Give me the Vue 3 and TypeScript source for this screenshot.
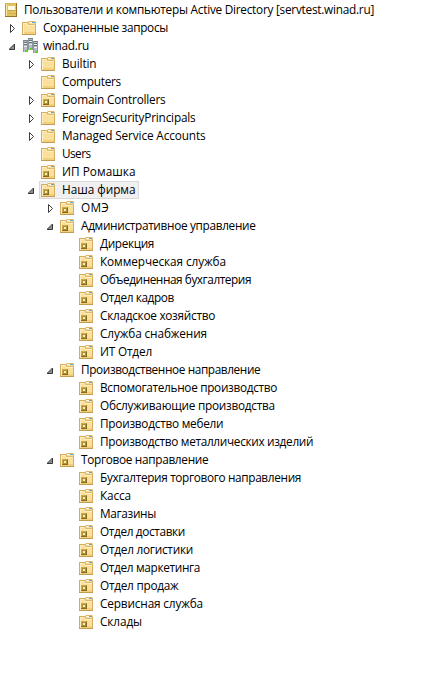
<script setup lang="ts">
type IconKind = 'console' | 'folder' | 'domain' | 'unit'

interface TreeRow {
  label: string
  level: number
  icon: IconKind
  width: number
  state?: 'open' | 'closed'
  selected?: boolean
}

const rows: TreeRow[] = [
  { label: 'Пользователи и компьютеры Active Directory [servtest.winad.ru]', level: 0, icon: 'console', width: 350 },
  { label: 'Сохраненные запросы', level: 1, icon: 'folder', width: 125, state: 'closed' },
  { label: 'winad.ru', level: 1, icon: 'domain', width: 46, state: 'open' },
  { label: 'Builtin', level: 2, icon: 'folder', width: 34.5, state: 'closed' },
  { label: 'Computers', level: 2, icon: 'folder', width: 59 },
  { label: 'Domain Controllers', level: 2, icon: 'unit', width: 103.5, state: 'closed' },
  { label: 'ForeignSecurityPrincipals', level: 2, icon: 'folder', width: 133.5, state: 'closed' },
  { label: 'Managed Service Accounts', level: 2, icon: 'folder', width: 143.5, state: 'closed' },
  { label: 'Users', level: 2, icon: 'folder', width: 28.5 },
  { label: 'ИП Ромашка', level: 2, icon: 'unit', width: 73.5 },
  { label: 'Наша фирма', level: 2, icon: 'unit', width: 73.5, state: 'open', selected: true },
  { label: 'ОМЭ', level: 3, icon: 'unit', width: 28, state: 'closed' },
  { label: 'Административное управление', level: 3, icon: 'unit', width: 174.5, state: 'open' },
  { label: 'Дирекция', level: 4, icon: 'unit', width: 54 },
  { label: 'Коммерческая служба', level: 4, icon: 'unit', width: 126 },
  { label: 'Объединенная бухгалтерия', level: 4, icon: 'unit', width: 151 },
  { label: 'Отдел кадров', level: 4, icon: 'unit', width: 74 },
  { label: 'Складское хозяйство', level: 4, icon: 'unit', width: 115 },
  { label: 'Служба снабжения', level: 4, icon: 'unit', width: 107 },
  { label: 'ИТ Отдел', level: 4, icon: 'unit', width: 52 },
  { label: 'Производственное направление', level: 3, icon: 'unit', width: 179.3, state: 'open' },
  { label: 'Вспомогательное производство', level: 4, icon: 'unit', width: 177 },
  { label: 'Обслуживающие производства', level: 4, icon: 'unit', width: 174.8 },
  { label: 'Производство мебели', level: 4, icon: 'unit', width: 123.3 },
  { label: 'Производство металлических изделий', level: 4, icon: 'unit', width: 213.2 },
  { label: 'Торговое направление', level: 3, icon: 'unit', width: 127.3, state: 'open' },
  { label: 'Бухгалтерия торгового направления', level: 4, icon: 'unit', width: 201 },
  { label: 'Касса', level: 4, icon: 'unit', width: 31 },
  { label: 'Магазины', level: 4, icon: 'unit', width: 56 },
  { label: 'Отдел доставки', level: 4, icon: 'unit', width: 85 },
  { label: 'Отдел логистики', level: 4, icon: 'unit', width: 93 },
  { label: 'Отдел маркетинга', level: 4, icon: 'unit', width: 100 },
  { label: 'Отдел продаж', level: 4, icon: 'unit', width: 78.5 },
  { label: 'Сервисная служба', level: 4, icon: 'unit', width: 103 },
  { label: 'Склады', level: 4, icon: 'unit', width: 42 },
]

// Top-left corners of the three server towers
const towers: [number, number][] = [[2, 2], [7, 0], [12, 3]]

const context = document.createElement('canvas').getContext('2d')!
context.font = '11.8px "Open Sans"'

function tracking(row: TreeRow): string {
  const natural = context.measureText(row.label).width
  return `${((row.width - natural) / row.label.length).toFixed(3)}px`
}
</script>

<template>
  <ul class="tree">
    <li v-for="row in rows" :key="row.label" class="row" :class="'level-' + row.level">
      <span v-if="row.level > 0" class="toggle">
        <svg v-if="row.state === 'closed'" width="8" height="11" viewBox="0 0 8 11">
          <path d="M1.5 1.5V9.5L5.5 5.5Z" fill="#fff" stroke="#3c3c3c" />
        </svg>
        <svg v-else-if="row.state === 'open'" width="8" height="11" viewBox="0 0 8 11">
          <path d="M5.5 3V8.5H0Z" fill="#909090" stroke="#383838" />
        </svg>
      </span>
      <span class="node" :class="{ selected: row.selected }">
        <svg v-if="row.icon === 'console'" class="icon" width="16" height="16" viewBox="0 0 16 16">
          <rect x="2" y="1" width="12" height="14" fill="#e2c361" />
          <path d="M2.5 1v14" stroke="#c19e3b" />
          <path d="M3.5 1v13" stroke="#f5e399" />
          <path d="M2 1.5h12" stroke="#d8b95a" />
          <path d="M13.5 1v14M2 14.5h12" fill="none" stroke="#957429" />
          <rect x="5" y="4" width="7" height="4" fill="#fffbe2" />
          <path d="M5 8.5h7" stroke="#c5a444" />
          <path d="M4 11.5h9" stroke="#d1b04e" />
        </svg>
        <svg v-else-if="row.icon === 'domain'" class="icon wide" width="18" height="16" viewBox="0 0 18 16">
          <g v-for="[x, y] in towers" :key="x">
            <rect :x="x" :y="y" width="5" height="12" fill="#b4bec4" />
            <path :d="`M${x + .5} ${y}v12`" stroke="#8e999f" />
            <path :d="`M${x} ${y + .5}h5`" stroke="#79858c" />
            <path :d="`M${x + 1} ${y + 2.5}h3M${x + 1} ${y + 4.5}h3`" stroke="#65727a" />
            <path :d="`M${x + 1} ${y + 3.5}h3M${x + 1} ${y + 6.5}h3`" stroke="#e5edf0" />
            <path :d="`M${x + 4.5} ${y + 1}v11`" stroke="#89959b" />
            <rect :x="x + 2" :y="y + 10" width="2" height="2" fill="#58dc18" />
          </g>
        </svg>
        <svg v-else class="icon" width="16" height="16" viewBox="0 0 16 16">
          <path d="M1 2h6l1 2h7v11H1Z" fill="#d5ad60" />
          <path d="M2 3h4.5l1 2H14v9H2Z" fill="#fae09b" />
          <path d="M2.5 14V3.5H6l1 2h7" fill="none" stroke="#ffefc0" />
          <path d="M7 4V2l1-1h6l1 1v3H8Z" fill="#dcb96d" />
          <path d="M8 2.5h6" stroke="#fff5d4" />
          <path d="M11 2.5h3" stroke="#55a9df" />
          <path d="M8 3.5h6" stroke="#f8dfa2" />
          <path d="M3 12.5h11M3 13.5h11" stroke="#f3cf7b" />
          <path d="M1 14.5h14" stroke="#c49d54" />
          <g v-if="row.icon === 'unit'">
            <rect x="3" y="7" width="6" height="6" fill="#ae9035" />
            <path d="M3 7.5h5M3.5 7v5" fill="none" stroke="#c9ab51" />
            <path d="M3 12.5h6M8.5 8v5" fill="none" stroke="#876c23" />
            <rect x="5" y="9" width="2" height="2" fill="#fff1ad" />
          </g>
        </svg>
        <span class="label" :style="{ letterSpacing: tracking(row) }">{{ row.label }}</span>
      </span>
    </li>
  </ul>
</template>

<style>
body {
  margin: 0;
  background: #fff;
}
</style>

<style scoped>
.tree {
  box-sizing: border-box;
  width: 438px;
  height: 675px;
  margin: 0;
  padding: 1px 0 0;
  overflow: hidden;
  list-style: none;
  background: #fff;
  color: #000;
  font: 11.8px/16px "Open Sans", "Noto Sans", sans-serif;
}

.row {
  display: flex;
  align-items: center;
  height: 18px;
  white-space: nowrap;
}

.level-0 { padding-left: 2px; }
.level-1 { padding-left: 8px; }
.level-2 { padding-left: 27px; }
.level-3 { padding-left: 46px; }
.level-4 { padding-left: 65px; }

.toggle {
  display: flex;
  align-items: center;
  box-sizing: border-box;
  width: 12px;
  height: 18px;
  padding: 1px 0 0 1px;
}

.node {
  display: flex;
  align-items: center;
  gap: 6px;
  box-sizing: border-box;
  height: 18px;
  padding: 0 2px 0 0;
  border: 1px solid transparent;
}

.level-0 .node {
  gap: 5px;
}

.selected {
  border-color: #d9d9d9;
  background: #f0f0f0;
}

.icon {
  flex: none;
  display: block;
}

.wide {
  margin-right: -2px;
}

.label {
  display: block;
  height: 16px;
  line-height: 14px;
}
</style>
